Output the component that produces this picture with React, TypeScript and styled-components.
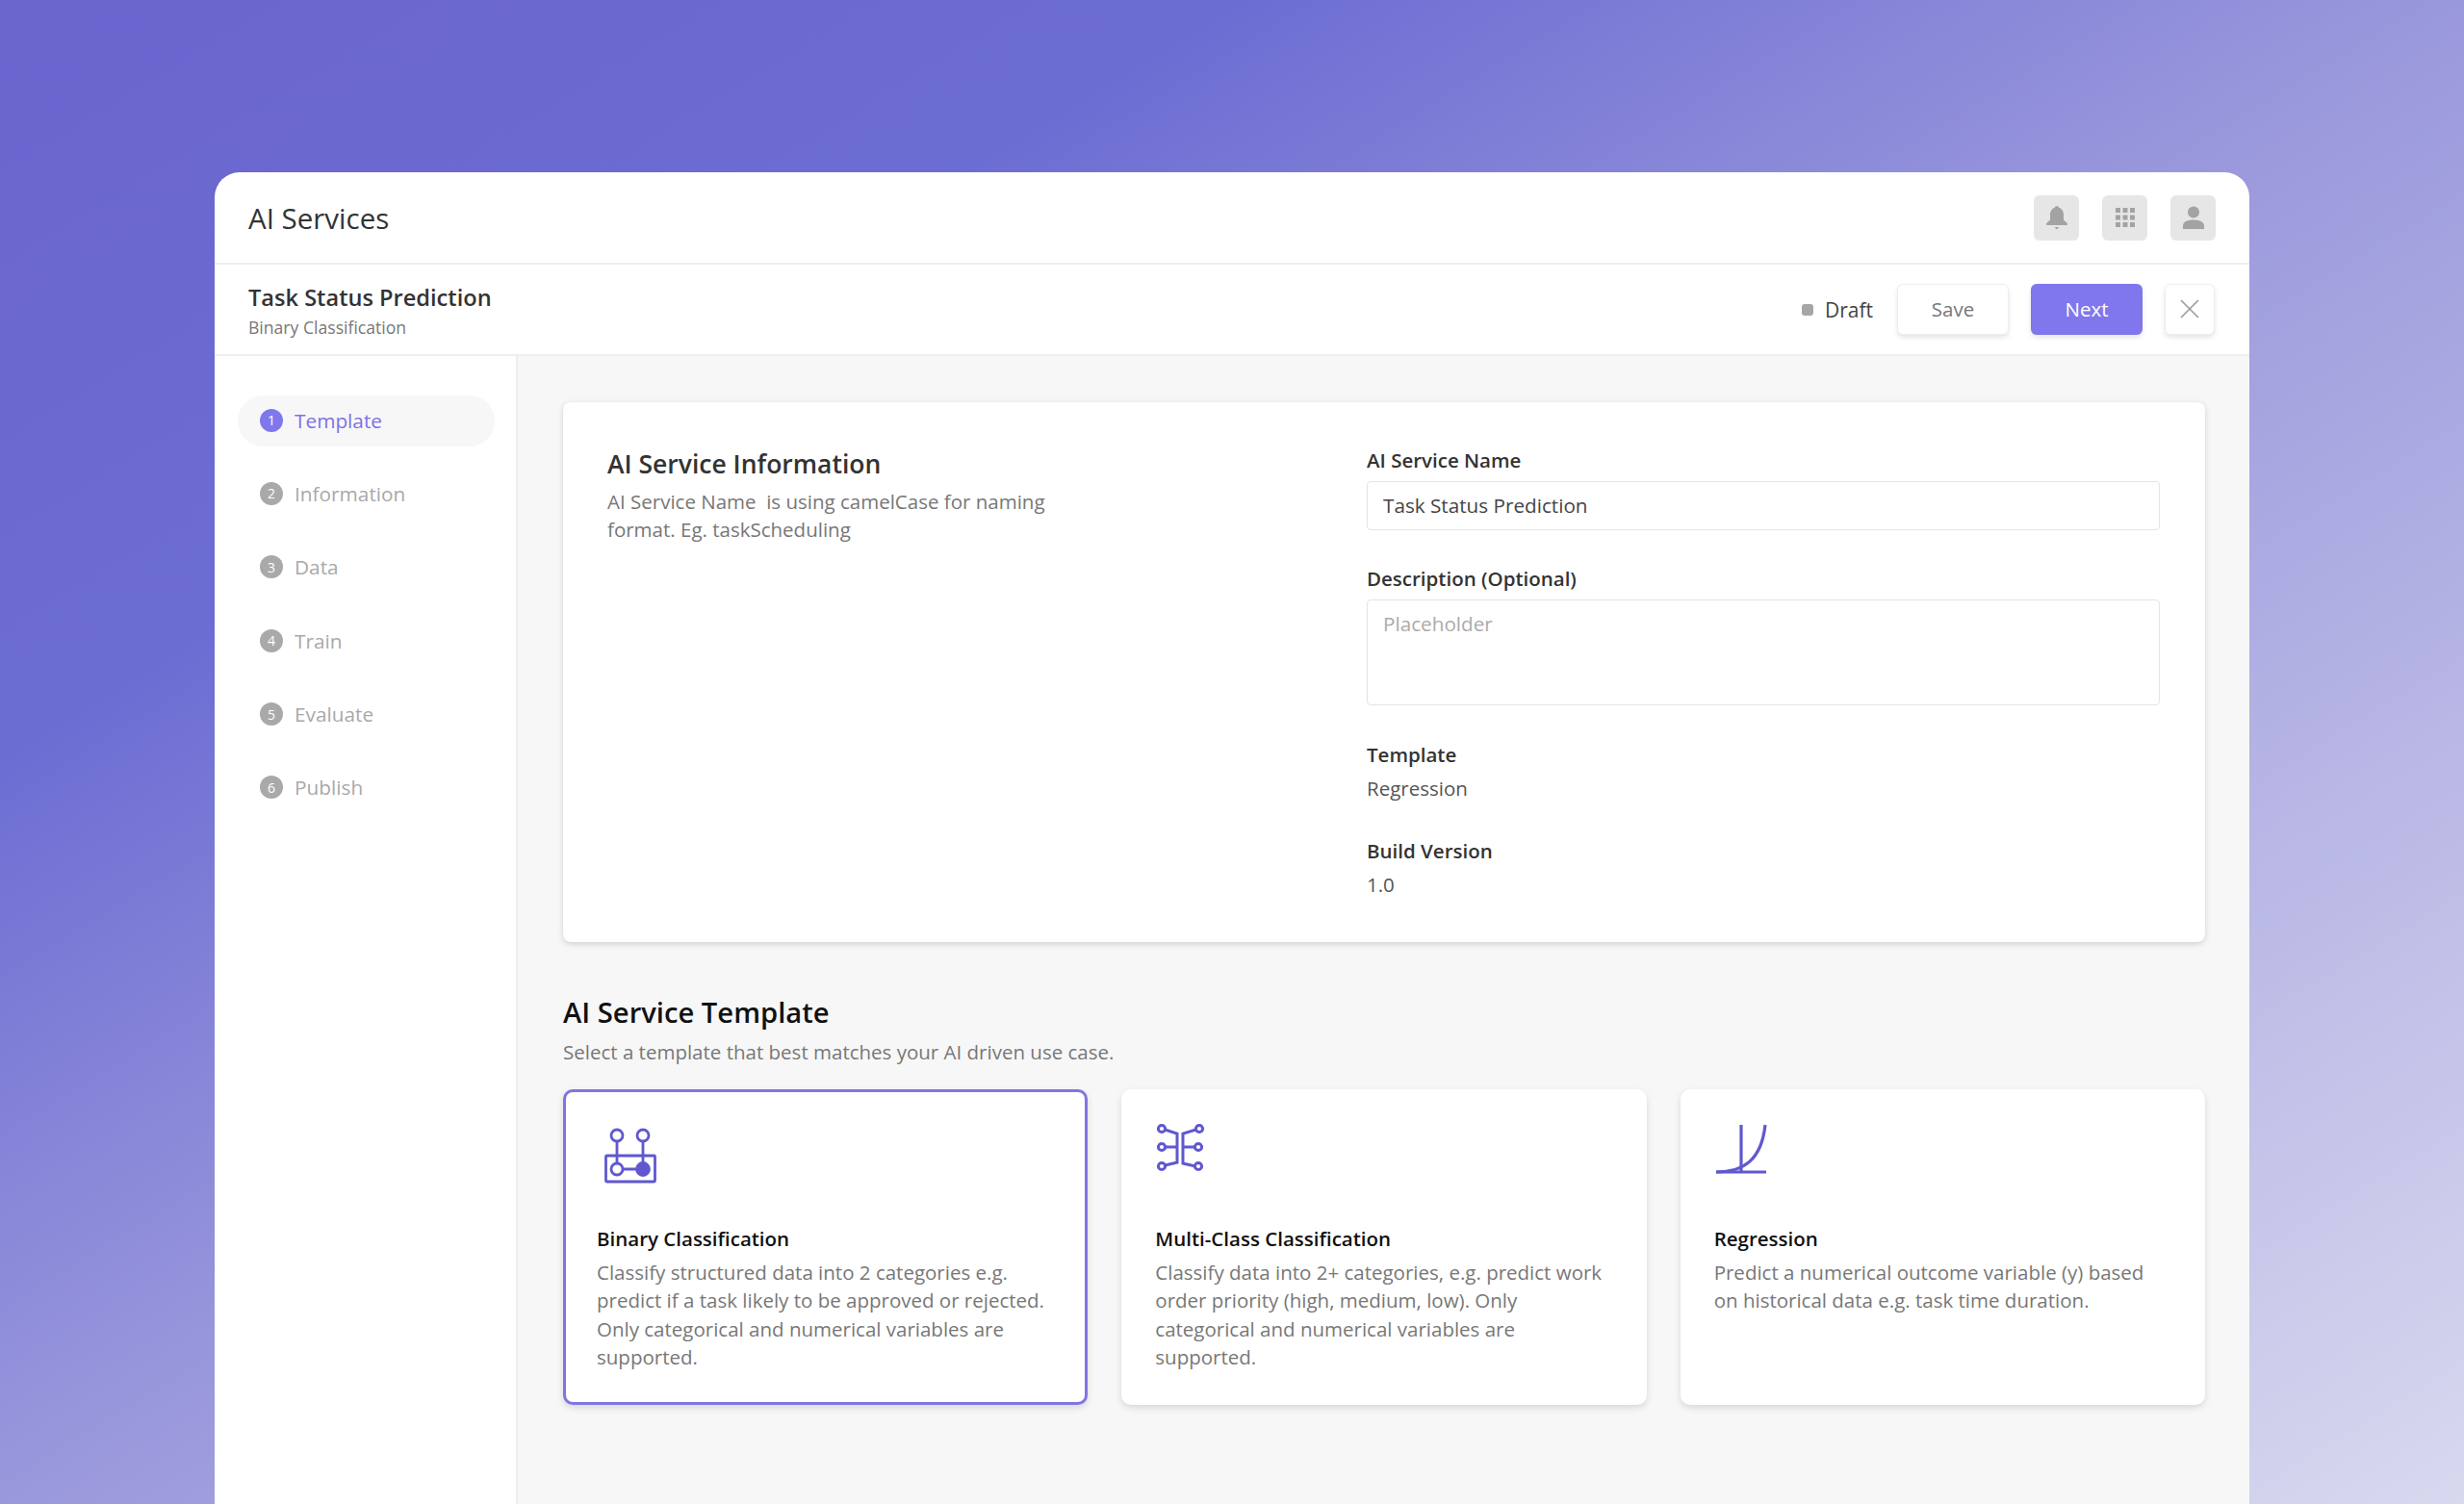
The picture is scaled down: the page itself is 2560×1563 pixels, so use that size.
import React from 'react'
import styled, { createGlobalStyle } from 'styled-components'

const GlobalStyle = createGlobalStyle`
  * { box-sizing: border-box; }
  html, body { margin: 0; padding: 0; }
  body {
    font-family: "Open Sans", "Noto Sans", sans-serif;
    color: #333;
    -webkit-font-smoothing: antialiased;
  }
`

const Page = styled.div`
  height: 1563px;
  overflow: hidden;
  padding: 179px 223px 0;
  background: linear-gradient(to bottom right, #6a64cd 0%, #6c6dd3 25%, #9a98dc 50%, #d8d8ef 100%);
`

const Shell = styled.div`
  height: 1384px;
  background: #fff;
  border-radius: 26px 26px 0 0;
  display: flex;
  flex-direction: column;
  overflow: hidden;
`

const TopBar = styled.header`
  height: 96px;
  flex: none;
  display: flex;
  align-items: center;
  justify-content: space-between;
  padding: 0 35px 0 35px;
  border-bottom: 2px solid #eeeeee;
`

const AppTitle = styled.h1`
  margin: 0;
  font-size: 29.5px;
  font-weight: 400;
  color: #333;
`

const IconGroup = styled.div`
  display: flex;
  gap: 24px;
`

const IconTile = styled.div`
  width: 47px;
  height: 47px;
  border-radius: 6px;
  background: #e6e6e6;
  display: flex;
  align-items: center;
  justify-content: center;
`

const SubBar = styled.div`
  height: 95px;
  flex: none;
  display: flex;
  align-items: center;
  justify-content: space-between;
  padding: 0 36px 0 35px;
  border-bottom: 2px solid #eeeeee;
`

const JobHeading = styled.div`
  padding-top: 2px;
`

const JobTitle = styled.div`
  font-size: 23.6px;
  line-height: 32px;
  font-weight: 600;
  color: #333;
`

const JobType = styled.div`
  margin-top: 2px;
  font-size: 17.6px;
  line-height: 26px;
  color: #777;
`

const Actions = styled.div`
  display: flex;
  align-items: center;
`

const Status = styled.div`
  display: flex;
  align-items: center;
  gap: 12px;
  font-size: 21px;
  color: #444;
  margin-right: 25px;
`

const StatusDot = styled.span`
  width: 12px;
  height: 12px;
  border-radius: 3px;
  background: #a6a6a6;
`

const Button = styled.button<{ $primary?: boolean; $square?: boolean }>`
  height: 53px;
  width: ${p => (p.$square ? '52px' : '116px')};
  margin-right: ${p => (p.$square ? '0' : '23px')};
  padding: 0 0 1px;
  display: flex;
  align-items: center;
  justify-content: center;
  border-radius: 6px;
  font: inherit;
  font-size: 20.5px;
  color: ${p => (p.$primary ? '#fff' : '#777')};
  background: ${p => (p.$primary ? '#8177ec' : '#fff')};
  border: ${p => (p.$primary ? 'none' : '1px solid #eeeeee')};
  box-shadow: 0 3px 5px rgba(0, 0, 0, 0.1);
`

const Body = styled.div`
  flex: 1;
  display: flex;
  min-height: 0;
`

const Sidebar = styled.nav`
  width: 315px;
  flex: none;
  padding: 41px 24px 0;
  border-right: 2px solid #eeeeee;
  display: flex;
  flex-direction: column;
  gap: 23.4px;
`

const Step = styled.div<{ $active?: boolean }>`
  height: 53px;
  width: 267px;
  border-radius: 27px;
  padding: 0 0 2px 23px;
  display: flex;
  align-items: center;
  gap: 12px;
  font-size: 20.8px;
  color: ${p => (p.$active ? '#7d72e6' : '#a9a9a9')};
  background: ${p => (p.$active ? '#f7f7f7' : 'transparent')};
`

const StepNumber = styled.span<{ $active?: boolean }>`
  width: 24px;
  height: 24px;
  border-radius: 50%;
  display: flex;
  align-items: center;
  justify-content: center;
  font-size: 14px;
  color: #fff;
  background: ${p => (p.$active ? '#8177ec' : '#a9a9a9')};
`

const Main = styled.main`
  flex: 1;
  background: #f7f7f8;
  padding: 48px 46px 0 47px;
`

const InfoCard = styled.section`
  background: #fff;
  border-radius: 8px;
  box-shadow: 0 2px 6px rgba(0, 0, 0, 0.16);
  padding: 45px 47px 45px 46px;
  display: grid;
  grid-template-columns: 1fr 824px;
`

const InfoHeading = styled.h2`
  margin: 1px 0 7px;
  font-size: 26.5px;
  line-height: 36px;
  font-weight: 600;
  color: #333;
`

const HelpText = styled.p`
  margin: 0;
  width: 480px;
  font-size: 20.5px;
  line-height: 29.4px;
  color: #777;
`

const Form = styled.div`
  display: flex;
  flex-direction: column;
`

const Label = styled.div<{ $gap?: string }>`
  font-size: 20.5px;
  line-height: 30px;
  font-weight: 600;
  color: #333;
  margin-top: ${p => p.$gap ?? '0'};
`

const TextInput = styled.input`
  height: 51px;
  margin-top: 7px;
  padding: 0 16px 2px;
  border: 1px solid #e4e4e4;
  border-radius: 4px;
  font: inherit;
  font-size: 20.7px;
  color: #444;
  outline: none;
`

const TextArea = styled.textarea`
  height: 110px;
  margin-top: 7px;
  padding: 9px 16px;
  border: 1px solid #e4e4e4;
  border-radius: 4px;
  font: inherit;
  font-size: 20.7px;
  line-height: 30px;
  resize: none;
  outline: none;
  &::placeholder { color: #ababab; }
`

const Value = styled.div`
  margin-top: 5px;
  font-size: 20.5px;
  line-height: 30px;
  color: #555;
`

const SectionHeading = styled.h2`
  margin: 53px 0 6px;
  font-size: 29.2px;
  line-height: 40px;
  font-weight: 600;
  color: #111;
`

const SectionText = styled.p`
  margin: 0 0 24px;
  font-size: 20.5px;
  line-height: 30px;
  color: #777;
`

const TemplateRow = styled.div`
  display: grid;
  grid-template-columns: repeat(3, 1fr);
  gap: 35px;
`

const TemplateCard = styled.article<{ $selected?: boolean }>`
  height: 328px;
  background: #fff;
  border-radius: 10px;
  border: 3px solid ${p => (p.$selected ? '#7f75e4' : '#fff')};
  padding: 33px 32px 0;
  box-shadow: 0 3px 7px rgba(0, 0, 0, 0.13);
`

const CardIcon = styled.div`
  height: 104px;
`

const CardTitle = styled.h3`
  margin: 0 0 6px;
  font-size: 20.5px;
  line-height: 30px;
  font-weight: 600;
  color: #111;
`

const CardText = styled.p`
  margin: 0;
  font-size: 20.5px;
  line-height: 29.4px;
  color: #777;
`

const BellIcon = () => (
  <svg width="24" height="26" viewBox="0 0 24 26" fill="#a3a3a3">
    <path d="M12 1c-1.2 0-2 .8-2.2 1.8C6.8 3.8 5 6.6 5 10v5.5L1.2 19v2h21.600v-2L19 15.500V10c0-3.400-1.800-6.200-4.800-7.200C14 1.800 13.200 1 12 1z" />
    <path d="M9.500 23h5L12 25.500z" />
  </svg>
)

const GridIcon = () => (
  <svg width="20" height="20" viewBox="0 0 20 20" fill="#a3a3a3">
    {[0, 7.5, 15].flatMap(y =>
      [0, 7.5, 15].map(x => <rect key={`${x}-${y}`} x={x} y={y} width="5" height="5" />)
    )}
  </svg>
)

const UserIcon = () => (
  <svg width="24" height="24" viewBox="0 0 24 24" fill="#a3a3a3">
    <circle cx="12" cy="6.500" r="6" />
    <path d="M1 24v-3.500C1 16.500 6 14.500 12 14.500s11 2 11 6V24z" />
  </svg>
)

const CloseIcon = () => (
  <svg width="22" height="22" viewBox="0 0 22 22" stroke="#9a9a9a" strokeWidth="1.600" fill="none">
    <path d="M2 2l18 18M20 2L2 20" />
  </svg>
)

const BinaryIcon = () => (
  <svg width="72" height="72" viewBox="0 0 72 72" fill="none" stroke="#5f58cf" strokeWidth="2.800">
    <rect x="9.500" y="33" width="51" height="27" rx="1" />
    <path d="M21 18v23M48 18v23M27 47h15" />
    <circle cx="21" cy="12" r="6" />
    <circle cx="48" cy="12" r="6" />
    <circle cx="21" cy="47" r="6" />
    <circle cx="48" cy="47" r="6.500" fill="#5f58cf" />
  </svg>
)

const MultiClassIcon = () => (
  <svg width="60" height="60" viewBox="0 0 60 60" fill="none" stroke="#5f58cf" strokeWidth="3">
    <circle cx="7" cy="5" r="3.600" />
    <circle cx="7" cy="24" r="3.600" />
    <circle cx="7" cy="44" r="3.600" />
    <circle cx="46" cy="5" r="3.600" />
    <circle cx="45" cy="24" r="3.600" />
    <circle cx="45" cy="44" r="3.600" />
    <path d="M10.500 6l12.500 4v30l-12.500 3M10.500 24H23" />
    <path d="M42.500 6L29 10v31l13 3M29 24h12.500" />
  </svg>
)

const RegressionIcon = () => (
  <svg width="60" height="60" viewBox="0 0 60 60" fill="none" stroke="#5f58cf" strokeWidth="3.200">
    <path d="M2 50h52M28 1v49" />
    <path d="M2 50c28 0 47-12 51-49" />
  </svg>
)

const steps = ['Template', 'Information', 'Data', 'Train', 'Evaluate', 'Publish']

const templates = [
  {
    icon: <BinaryIcon />,
    title: 'Binary Classification',
    text: 'Classify structured data into 2 categories e.g. predict if a task likely to be approved or rejected. Only categorical and numerical variables are supported.',
    selected: true,
  },
  {
    icon: <MultiClassIcon />,
    title: 'Multi-Class Classification',
    text: 'Classify data into 2+ categories, e.g. predict work order priority (high, medium, low). Only categorical and numerical variables are supported.',
  },
  {
    icon: <RegressionIcon />,
    title: 'Regression',
    text: 'Predict a numerical outcome variable (y) based on historical data e.g. task time duration.',
  },
]

export default function App() {
  return (
    <Page>
      <GlobalStyle />
      <Shell>
        <TopBar>
          <AppTitle>AI Services</AppTitle>
          <IconGroup>
            <IconTile><BellIcon /></IconTile>
            <IconTile><GridIcon /></IconTile>
            <IconTile><UserIcon /></IconTile>
          </IconGroup>
        </TopBar>
        <SubBar>
          <JobHeading>
            <JobTitle>Task Status Prediction</JobTitle>
            <JobType>Binary Classification</JobType>
          </JobHeading>
          <Actions>
            <Status><StatusDot />Draft</Status>
            <Button>Save</Button>
            <Button $primary>Next</Button>
            <Button $square><CloseIcon /></Button>
          </Actions>
        </SubBar>
        <Body>
          <Sidebar>
            {steps.map((s, i) => (
              <Step key={s} $active={i === 0}>
                <StepNumber $active={i === 0}>{i + 1}</StepNumber>
                {s}
              </Step>
            ))}
          </Sidebar>
          <Main>
            <InfoCard>
              <div>
                <InfoHeading>AI Service Information</InfoHeading>
                <HelpText>AI Service Name&nbsp; is using camelCase for naming format. Eg. taskScheduling</HelpText>
              </div>
              <Form>
                <Label>AI Service Name</Label>
                <TextInput defaultValue="Task Status Prediction" />
                <Label $gap="35px">Description (Optional)</Label>
                <TextArea placeholder="Placeholder" />
                <Label $gap="36px">Template</Label>
                <Value>Regression</Value>
                <Label $gap="35px">Build Version</Label>
                <Value>1.0</Value>
              </Form>
            </InfoCard>
            <SectionHeading>AI Service Template</SectionHeading>
            <SectionText>Select a template that best matches your AI driven use case.</SectionText>
            <TemplateRow>
              {templates.map(t => (
                <TemplateCard key={t.title} $selected={t.selected}>
                  <CardIcon>{t.icon}</CardIcon>
                  <CardTitle>{t.title}</CardTitle>
                  <CardText>{t.text}</CardText>
                </TemplateCard>
              ))}
            </TemplateRow>
          </Main>
        </Body>
      </Shell>
    </Page>
  )
}
